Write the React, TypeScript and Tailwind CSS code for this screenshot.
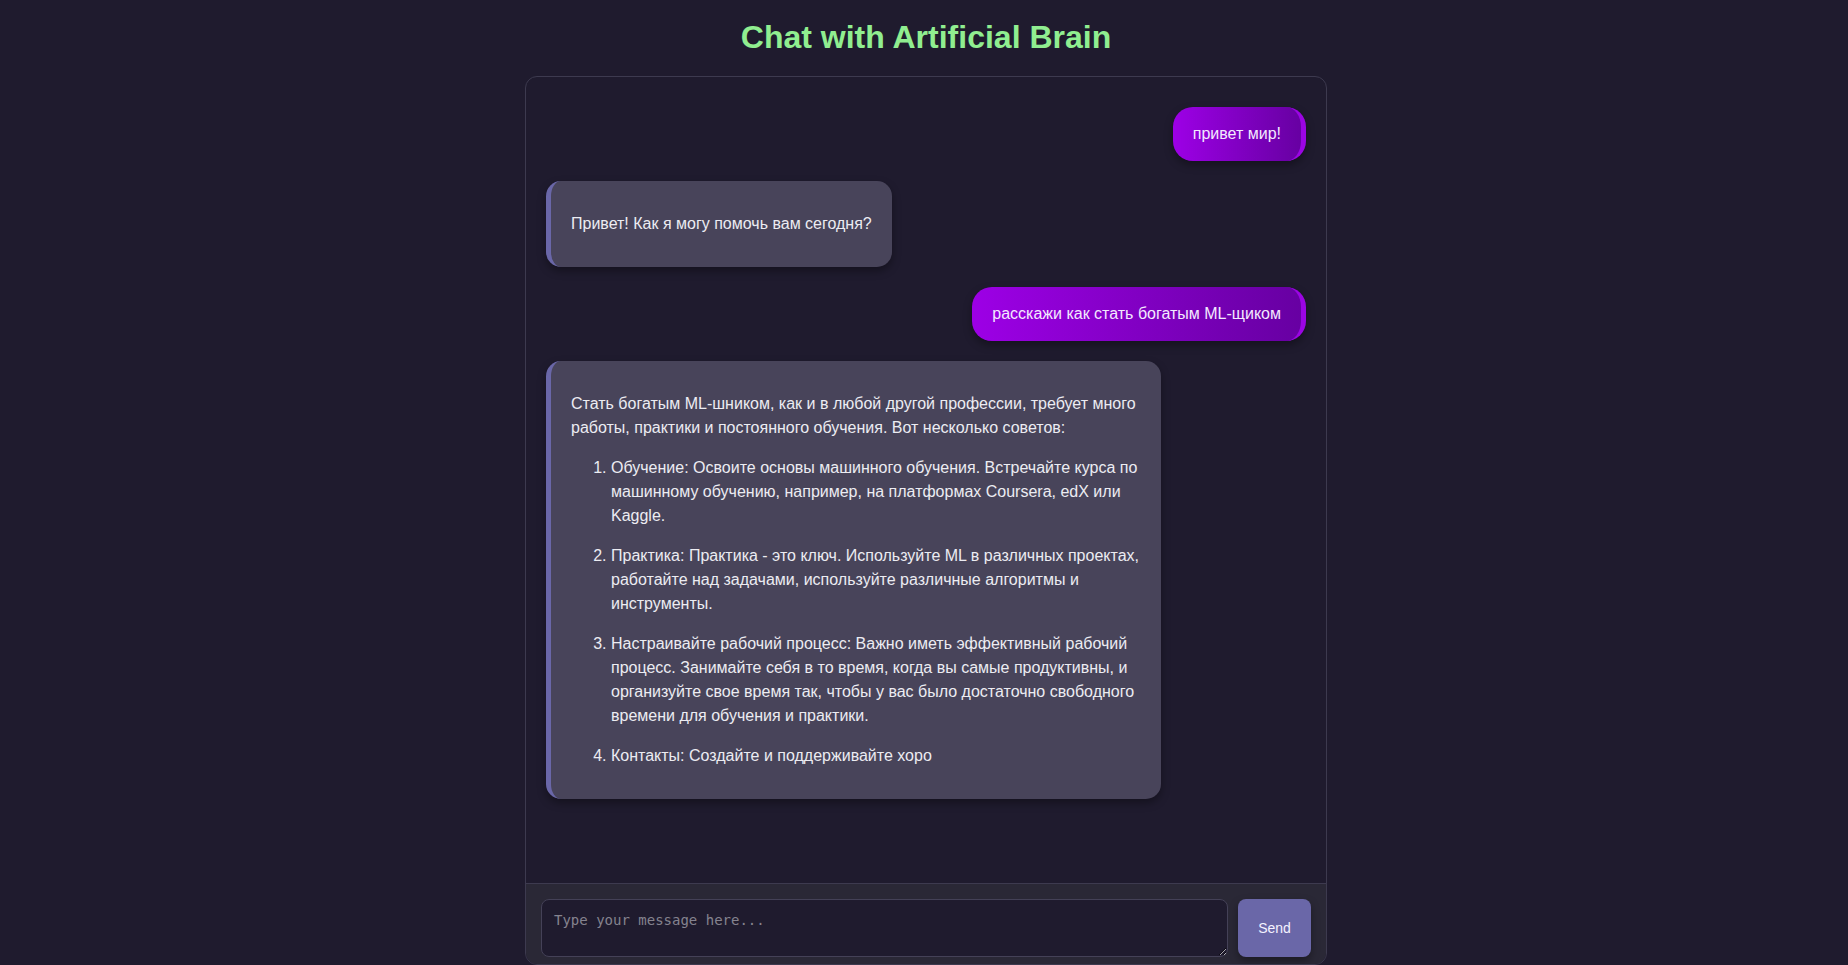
type Message = {
  role: "user" | "bot";
  text?: string;
};

const messages: Message[] = [
  { role: "user", text: "привет мир!" },
  { role: "bot", text: "Привет! Как я могу помочь вам сегодня?" },
  { role: "user", text: "расскажи как стать богатым ML-щиком" },
  { role: "bot" },
];

const tips = [
  "Обучение: Освоите основы машинного обучения. Встречайте курса по машинному обучению, например, на платформах Coursera, edX или Kaggle.",
  "Практика: Практика - это ключ. Используйте ML в различных проектах, работайте над задачами, используйте различные алгоритмы и инструменты.",
  "Настраивайте рабочий процесс: Важно иметь эффективный рабочий процесс. Занимайте себя в то время, когда вы самые продуктивны, и организуйте свое время так, чтобы у вас было достаточно свободного времени для обучения и практики.",
  "Контакты: Создайте и поддерживайте хоро",
];

function UserBubble({ text }: { text: string }) {
  return (
    <div className="my-[10px] self-end rounded-[20px] border-r-[5px] border-[#9b05e3] bg-gradient-to-r from-[#9d00e6] to-[#6700a2] px-5 py-[15px] text-[16px] leading-6 text-[#f3e9ff] shadow-[0_4px_8px_rgba(0,0,0,0.35)]">
      {text}
    </div>
  );
}

function BotBubble({ children }: { children: React.ReactNode }) {
  return (
    <div className="my-[10px] w-fit max-w-[615px] self-start rounded-[15px] border-l-[5px] border-[#6a67a8] bg-[#48445a] px-5 py-[15px] text-[16px] leading-6 text-[#ececf2] shadow-[0_4px_8px_rgba(0,0,0,0.35)]">
      {children}
    </div>
  );
}

export default function App() {
  return (
    <div className="flex h-screen flex-col items-center overflow-hidden bg-[#1f1b2e] pt-[19px] pl-1 font-['Liberation_Sans',Arial,sans-serif]">
      <h1 className="mb-[21px] text-[32px] leading-[36px] font-bold text-[#90ee90]">
        Chat with Artificial Brain
      </h1>

      <div className="flex w-[802px] flex-1 flex-col overflow-hidden rounded-[12px] border border-[#3d3a4f] bg-[#1f1b2e]">
        <div className="flex flex-1 flex-col overflow-hidden p-5">
          {messages.map((m, i) =>
            m.role === "user" ? (
              <UserBubble key={i} text={m.text ?? ""} />
            ) : (
              <BotBubble key={i}>
                {m.text ? (
                  <p className="my-4">{m.text}</p>
                ) : (
                  <>
                    <p className="my-4">
                      Стать богатым ML-шником, как и в любой другой профессии, требует много
                      работы, практики и постоянного обучения. Вот несколько советов:
                    </p>
                    <ol className="my-4 list-decimal pl-10">
                      {tips.map((t, j) => (
                        <li key={j} className="my-4">
                          {t}
                        </li>
                      ))}
                    </ol>
                  </>
                )}
              </BotBubble>
            )
          )}
        </div>

        <div className="flex gap-[10px] border-t border-[#3d3a4f] bg-[#2a2836] px-[15px] pt-[15px] pb-[7px]">
          <textarea
            placeholder="Type your message here..."
            className="h-[58px] flex-1 resize-y rounded-[8px] border border-[#444157] bg-[#1f1b2e] px-3 py-[10px] font-['DejaVu_Sans_Mono',monospace] text-[14px] text-[#e0e0e0] outline-none placeholder:text-[#85838f]"
          />
          <button className="h-[58px] w-[73px] rounded-[8px] bg-[#6a67a8] text-[14px] text-[#f4f2ff] shadow-[0_4px_8px_rgba(0,0,0,0.35)]">
            Send
          </button>
        </div>
      </div>
    </div>
  );
}
